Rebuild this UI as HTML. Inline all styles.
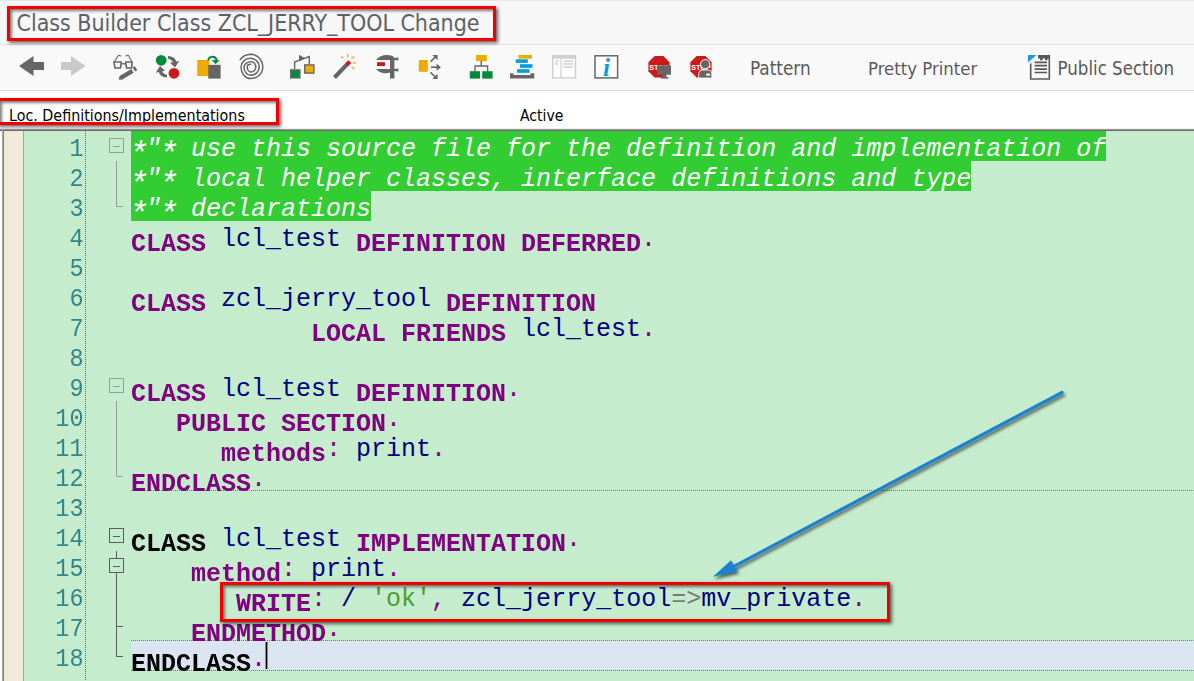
<!DOCTYPE html>
<html><head><meta charset="utf-8"><title>Class Builder Class ZCL_JERRY_TOOL Change</title>
<style>
html,body{margin:0;padding:0;}
body{width:1194px;height:681px;overflow:hidden;position:relative;background:#fff;font-family:"Liberation Sans",sans-serif;}
#titlebar{position:absolute;left:0;top:0;width:1194px;height:44px;background:#f7f7f7;}
#titletop{position:absolute;left:0;top:0;width:1194px;height:1px;background:#e6e6e6;}
#title{position:absolute;left:16.5px;top:9px;font-family:"DejaVu Sans Condensed","Liberation Sans",sans-serif;font-size:22.95px;line-height:28px;color:#5d6167;white-space:nowrap;}
#toolbar{position:absolute;left:0;top:44px;width:1194px;height:47px;background:#f9f9f9;border-top:1px solid #e2e2e2;border-bottom:1px solid #dedede;box-sizing:border-box;}
.tbtxt{position:absolute;top:58px;line-height:22px;color:#595959;white-space:nowrap;font-family:"DejaVu Sans Condensed","Liberation Sans",sans-serif;}
#status{position:absolute;left:0;top:91px;width:1194px;height:38px;background:#fff;}
.sttxt{position:absolute;top:106px;font-size:15.7px;line-height:20px;color:#000;white-space:nowrap;font-family:"DejaVu Sans Condensed","Liberation Sans",sans-serif;}
.redbox{position:absolute;border:3px solid #f20000;box-sizing:border-box;box-shadow:2px 2px 3.5px rgba(0,0,0,.6), inset 2px 2px 3px 0 rgba(0,0,0,.5);}
#editor{position:absolute;left:2px;top:130px;width:1192px;height:551px;background:#c6ecce;}
#edtop{position:absolute;left:0;top:128px;width:1194px;height:3px;background:linear-gradient(#f1f1f1 0,#f1f1f1 33%,#9a9a9a 34%,#9a9a9a 66%,#6c6c6c 67%);}
#edleft{position:absolute;left:2px;top:130px;width:2px;height:551px;background:linear-gradient(90deg,#bdbdbd,#707070);}
#marg{position:absolute;left:4px;top:131px;width:19px;height:550px;background:#f1ead9;border-right:1px solid #a5aaa0;}
.cbg{position:absolute;left:131px;height:30px;background:#32cd32;}
#curline{position:absolute;left:131px;top:641px;width:1063px;height:29px;background:#dbe5f1;}
.ln{position:absolute;left:24px;width:59.5px;transform:scale(.94,1.05);transform-origin:100% 72%;text-align:right;font:25px/30px "Liberation Mono",monospace;color:#338589;height:30px;}
.cl{position:absolute;left:131px;white-space:pre;font:25px/30px "Liberation Mono",monospace;color:#000080;height:30px;}
.k{font-weight:bold;color:#800080;position:relative;top:5px;display:inline-block;transform:scaleY(1.06);transform-origin:0 72%;}
.kb{font-weight:bold;color:#000;position:relative;top:5px;display:inline-block;transform:scaleY(1.06);transform-origin:0 72%;}
.c{font-style:italic;color:#fff;}
.s{color:#4aa02a;}
.a{display:inline-block;transform-origin:50% 29%;transform:translateY(4px) scale(1.3);}
.p{color:#800080;}
.o{color:#7a7a7a;}
svg{position:absolute;left:0;top:0;overflow:visible;}
</style></head><body>
<div id="titlebar"></div><div id="titletop"></div>
<div id="title">Class Builder Class ZCL_JERRY_TOOL Change</div>
<div id="toolbar"></div>
<div class="tbtxt" style="left:750px;top:58px;font-size:18.8px">Pattern</div>
<div class="tbtxt" style="left:868px;font-size:18.4px">Pretty Printer</div>
<div class="tbtxt" style="left:1057.5px;font-size:18.55px">Public Section</div>
<div id="status"></div>
<div class="sttxt" style="left:9px;font-size:15.9px">Loc. Definitions/Implementations</div>
<div class="sttxt" style="left:520px;font-size:15.6px">Active</div>
<div id="editor"></div>
<div id="edtop"></div><div id="edleft"></div><div id="marg"></div>
<div class="cbg" style="top:131px;width:975px"></div>
<div class="cbg" style="top:161px;width:840px"></div>
<div class="cbg" style="top:191px;width:240px"></div>
<div id="curline"></div>
<svg id="icons" width="1194" height="130" viewBox="0 0 1194 130">
<!-- back -->
<path d="M19 66 L33.5 56 L33.5 62 L44 62 L44 70 L33.5 70 L33.5 76 Z" fill="#666"/>
<!-- forward -->
<path d="M85.6 66 L71 56 L71 62 L61 62 L61 70 L71 70 L71 76 Z" fill="#c9c9c9"/>
<!-- glasses + pencil -->
<g fill="none" stroke="#666" stroke-width="1.600" stroke-linejoin="round">
<path d="M114 62 L121.300 62 L120.500 68 L115 68 Z"/>
<path d="M125.600 62 L132.200 62 L131.600 68 L126.600 68 Z"/>
<path d="M121.300 63.800 L125.600 63.800" stroke-width="1.300"/>
</g>
<g fill="none" stroke="#666" stroke-width="1.100" stroke-linecap="round">
<path d="M114.400 61.500 L118.200 55.700 Q119 54.700 120.600 56"/>
<path d="M131.700 61.500 L128.600 55.700 Q127.800 54.700 125.900 56"/>
</g>
<path d="M119.600 76 L131.300 69 L133.600 72.700 L122 79.700 L118.600 79.400 Z" fill="#666"/>
<path d="M132.500 67.600 L134.600 66.200 L137.300 70.100 L135.100 71.500 Z" fill="#666"/>
<!-- activate circles -->
<circle cx="161.2" cy="60.3" r="5.4" fill="#008a3a"/>
<circle cx="174" cy="73.3" r="5.4" fill="#cc1a1a"/>
<path d="M168 56 Q175 56.5 176.2 61.5 L179.3 60.8 L175 67.5 L170 62.8 L172.8 62.2 Q172 59.5 168 58.8 Z" fill="#666"/>
<path d="M167 77.5 Q160 77 158.8 72 L155.7 72.7 L160 66 L165 70.7 L162.2 71.3 Q163 74 167 74.7 Z" fill="#666"/>
<!-- copy boxes with green arrow -->
<rect x="197.2" y="60" width="12" height="16" fill="#f0ab00"/>
<rect x="208.3" y="64.8" width="12.3" height="13.8" fill="#666"/>
<path d="M208.3 60.5 A4.2 4.2 0 0 1 216.6 60" fill="none" stroke="#008a3a" stroke-width="2"/>
<path d="M211.8 60 L219.5 60 L215.6 64.2 Z" fill="#008a3a"/>
<!-- spiral -->
<path d="M240.2 59.6 Q244 54.4 250.5 54.2 A12.30 12.80 0 0 1 262.8 67 A12.30 11.60 0 0 1 250.5 78.6 A9.50 11.60 0 0 1 241 67 A9.50 8.70 0 0 1 250.5 58.3 A8.80 8.70 0 0 1 259.3 67 A8.80 8.30 0 0 1 250.5 75.3 A6.50 8.30 0 0 1 244 67 A7.00 5.20 0 0 1 251 61.8 A4.80 5.20 0 0 1 255.8 67 A4.80 5.00 0 0 1 251 72 A3.80 5.00 0 0 1 247.2 67 A3.30 2.70 0 0 1 250.5 64.3" fill="none" stroke="#666" stroke-width="1.5" stroke-linecap="round"/>
<!-- balance -->
<g fill="none" stroke="#666" stroke-width="1.4">
<path d="M294.6 69 L294.6 62 L309.3 56.6 L309.3 64"/>
</g>
<path d="M299 54.8 L299 61 L305 58.2 Z" fill="#666"/>
<rect x="290.700" y="69.900" width="9.200" height="8" fill="#008a3a" stroke="#666" stroke-width="1.400"/>
<rect x="304.700" y="64.900" width="9.200" height="8.200" fill="#f0ab00" stroke="#666" stroke-width="1.400"/>
<!-- wand -->
<path d="M333 76 L346 62.500 L349 65.300 L336 79 Z" fill="#666"/>
<path d="M345.300 63.200 L348.300 60.200 L351.300 63 L348.300 66 Z" fill="#cc1a1a"/>
<g stroke="#f0ab00" stroke-width="1.300" fill="none">
<path d="M347.600 54 L347.600 57.500"/><path d="M341 56.600 L343.500 58.300"/><path d="M351.500 58.300 L354.300 56.500"/><path d="M353 63 L356 63"/><path d="M351.800 67 L354.300 69.300"/>
</g>
<!-- clamp -->
<path d="M376 60 Q380 55 387 55 Q393 55 394.500 58 L398.400 57.500 L398.400 60.500 L394.400 60 L394.400 68.900 L398.400 68.400 L398.400 71.500 L394.400 71 L394.400 78.600 L390 78.600 L390 72.500 Q387 73.800 383 73 Q378.500 72 376 69 L390 69 L390 60 Z" fill="#666"/>
<rect x="377" y="62.200" width="8" height="3.800" fill="#cc1a1a"/>
<!-- box with arrows -->
<rect x="418.800" y="60" width="9" height="11.800" fill="#f0ab00"/>
<g stroke="#666" stroke-width="1.600" fill="none">
<path d="M430.500 61.700 L435.500 57"/>
<path d="M431 67.200 L438 67.200"/>
<path d="M430.500 72.300 L435.500 77"/>
</g>
<path d="M432.300 55 L437.600 55 L437.600 60.300 Z M436.600 63.700 L441 67.200 L436.600 70.700 Z M432.300 79 L437.600 79 L437.600 73.700 Z" fill="#666"/>
<!-- hierarchy -->
<rect x="476" y="55" width="10.800" height="6.200" fill="#f0ab00"/>
<path d="M481.300 61 L481.300 66 M475 71.500 L475 66 L487.600 66 L487.600 71.500" fill="none" stroke="#666" stroke-width="1.400"/>
<rect x="469.800" y="71.200" width="10.200" height="7.400" fill="#008a3a"/>
<rect x="482.200" y="71.200" width="10.400" height="7.400" fill="#008a3a"/>
<!-- stack -->
<rect x="518.400" y="55" width="13.600" height="3.700" fill="#f0ab00"/>
<rect x="515.700" y="59.300" width="12.100" height="3.600" fill="#009de0"/>
<rect x="520" y="64.200" width="12.500" height="3.600" fill="#009de0"/>
<rect x="517" y="69.200" width="12.600" height="3.600" fill="#009de0"/>
<path d="M510 73.200 L513.500 73.200 L513.500 75 L530.500 75 L530.500 73.200 L534.300 73.200 L534.300 78.600 L510 78.600 Z" fill="#666"/>
<!-- layout gray -->
<rect x="552.700" y="55.800" width="22.700" height="22.100" fill="#fff" stroke="#cfcfcf" stroke-width="1.400"/>
<rect x="552" y="55.100" width="24.100" height="3.600" fill="#cfcfcf"/>
<path d="M561 58 L561 78" stroke="#cfcfcf" stroke-width="1.200"/>
<path d="M555 61 L558.300 61 M555 64 L558.300 64 M563.200 61 L573 61 M563.200 64 L573 64 M563.200 67 L573 67" stroke="#cfcfcf" stroke-width="1.500"/>
<!-- info -->
<rect x="595" y="55.800" width="22.600" height="22.100" fill="#fff" stroke="#666" stroke-width="1.500"/>
<text x="603" y="76" font-family="Liberation Serif, serif" font-style="italic" font-weight="bold" font-size="25" fill="#009de0">i</text>
<!-- stop + monitor -->
<path d="M654.600 56 L663.400 56 L669.600 62.200 L669.600 71.200 L663.400 77.500 L654.600 77.500 L648.400 71.200 L648.400 62.200 Z" fill="#cc1a1a"/>
<text x="649.300" y="69.500" font-family="Liberation Sans, sans-serif" font-weight="bold" font-size="7.200" fill="#fff">STOP</text>
<rect x="657.200" y="65.300" width="13.800" height="9.400" fill="#666"/>
<rect x="663" y="74.500" width="3.500" height="3" fill="#666"/>
<rect x="660.700" y="77" width="7.700" height="1.600" fill="#666"/>
<!-- stop + person -->
<path d="M696.600 56 L705.400 56 L711.600 62.200 L711.600 71.200 L705.400 77.500 L696.600 77.500 L690.400 71.200 L690.400 62.200 Z" fill="#cc1a1a"/>
<text x="691.300" y="69.500" font-family="Liberation Sans, sans-serif" font-weight="bold" font-size="7.200" fill="#fff">STOP</text>
<circle cx="705.200" cy="64.200" r="4.600" fill="#666" stroke="#fff" stroke-width="1"/>
<path d="M698.700 78 L698.700 73.500 Q698.700 70 702.500 70 L708 70 Q711.800 70 711.800 73.500 L711.800 78 Z" fill="#666" stroke="#fff" stroke-width="0.800"/>
<rect x="706.200" y="73.600" width="3.800" height="2" fill="#fff"/>
<!-- public section doc icon -->
<path d="M1028 55 L1036.500 55 L1028 62.500 Z" fill="#1a9be0"/>
<path d="M1038 55.800 L1049.300 55.800 L1049.300 79 L1030.700 79 L1030.700 63.500" fill="none" stroke="#595959" stroke-width="1.600"/>
<path d="M1038 55 L1050 55 L1050 58.500 L1047.500 58.500 L1047.500 60.300 L1045 60.300 L1045 58.500 L1042.500 58.500 L1042.500 60.300 L1040 60.300 L1040 58.500 L1038 58.500 Z" fill="#595959"/>
<path d="M1034.600 62.300 L1047 62.300 M1034.600 65.700 L1047 65.700 M1034.600 69.100 L1047 69.100 M1034.600 72.500 L1047 72.500" stroke="#595959" stroke-width="1.700"/>
</svg>
<svg id="edsvg" width="1194" height="681" viewBox="0 0 1194 681">
<defs><filter id="sh" x="-5%" y="-5%" width="110%" height="120%"><feDropShadow dx="1.500" dy="2.500" stdDeviation="1.700" flood-color="#000" flood-opacity="0.600"/></filter></defs>
<!-- dotted vertical -->
<path d="M85.500 131 L85.500 681" stroke="#2c8286" stroke-width="1" stroke-dasharray="1 1" fill="none"/>
<!-- dotted horizontals -->
<g stroke="#3b8c96" stroke-width="1" stroke-dasharray="1 1" fill="none">
<path d="M131 490.500 L1194 490.500"/><path d="M131 640.500 L1194 640.500"/><path d="M131 670.500 L1194 670.500"/>
</g>
<!-- fold markers (light) -->
<g fill="none" stroke="#9a9a9a" stroke-width="1">
<rect x="109.500" y="138.500" width="14" height="14"/><path d="M113 146.500 L120 146.500"/>
<path d="M116.500 161 L116.500 206.500 L123 206.500"/>
<rect x="109.500" y="378.500" width="14" height="14"/><path d="M113 386.500 L120 386.500"/>
<path d="M116.500 401 L116.500 476.500 L123 476.500"/>
</g>
<!-- fold markers (active) -->
<g fill="none" stroke="#5c5c5c" stroke-width="1">
<rect x="109.500" y="528.500" width="14" height="14"/><path d="M113 536.500 L120 536.500"/>
<path d="M116.500 551 L116.500 558"/>
<rect x="109.500" y="558.500" width="14" height="14"/><path d="M113 566.500 L120 566.500"/>
<path d="M116.500 573 L116.500 656.500 L123 656.500 M116.500 626.500 L123 626.500"/>
</g>
<!-- cursor -->
<path d="M266.500 642 L266.500 669" stroke="#000" stroke-width="1.800"/>
<!-- arrow -->
<g filter="url(#sh)">
<path d="M1062 392.500 L733 566.800" stroke="#1b82d0" stroke-width="3.200" stroke-linecap="round" fill="none"/>
<path d="M712.900 576.800 L731 560.200 L734.300 566.300 L737.700 571.200 Z" fill="#1b82d0"/>
</g>
</svg>
<div class="ln" style="top:134.6px">1</div>
<div class="cl" style="top:135px"><span class="c"><span class="a">*</span>"<span class="a">*</span> use this source file for the definition and implementation of</span></div>
<div class="ln" style="top:164.6px">2</div>
<div class="cl" style="top:165px"><span class="c"><span class="a">*</span>"<span class="a">*</span> local helper classes, interface definitions and type</span></div>
<div class="ln" style="top:194.6px">3</div>
<div class="cl" style="top:195px"><span class="c"><span class="a">*</span>"<span class="a">*</span> declarations</span></div>
<div class="ln" style="top:224.6px">4</div>
<div class="cl" style="top:225px"><span class="k">CLASS</span> lcl_test <span class="k">DEFINITION DEFERRED</span><span class="p">.</span></div>
<div class="ln" style="top:254.6px">5</div>
<div class="ln" style="top:284.6px">6</div>
<div class="cl" style="top:285px"><span class="k">CLASS</span> zcl_jerry_tool <span class="k">DEFINITION</span></div>
<div class="ln" style="top:314.6px">7</div>
<div class="cl" style="top:315px">            <span class="k">LOCAL FRIENDS</span> lcl_test<span class="p">.</span></div>
<div class="ln" style="top:344.6px">8</div>
<div class="ln" style="top:374.6px">9</div>
<div class="cl" style="top:375px"><span class="k">CLASS</span> lcl_test <span class="k">DEFINITION</span><span class="p">.</span></div>
<div class="ln" style="top:404.6px">10</div>
<div class="cl" style="top:405px">   <span class="k">PUBLIC SECTION</span><span class="p">.</span></div>
<div class="ln" style="top:434.6px">11</div>
<div class="cl" style="top:435px">      <span class="k">methods</span><span class="p">:</span> print<span class="p">.</span></div>
<div class="ln" style="top:464.6px">12</div>
<div class="cl" style="top:465px"><span class="k">ENDCLASS</span><span class="p">.</span></div>
<div class="ln" style="top:494.6px">13</div>
<div class="ln" style="top:524.6px">14</div>
<div class="cl" style="top:525px"><span class="kb">CLASS</span> lcl_test <span class="k">IMPLEMENTATION</span><span class="p">.</span></div>
<div class="ln" style="top:554.6px">15</div>
<div class="cl" style="top:555px">    <span class="k">method</span><span class="p">:</span> print<span class="p">.</span></div>
<div class="ln" style="top:584.6px">16</div>
<div class="cl" style="top:585px">       <span class="k">WRITE</span><span class="p">:</span> / <span class="s">'ok'</span><span class="p">,</span> zcl_jerry_tool<span class="o">=&gt;</span>mv_private<span class="p">.</span></div>
<div class="ln" style="top:614.6px">17</div>
<div class="cl" style="top:615px">    <span class="k">ENDMETHOD</span><span class="p">.</span></div>
<div class="ln" style="top:644.6px">18</div>
<div class="cl" style="top:645px"><span class="kb">ENDCLASS</span><span class="p">.</span></div><div class="redbox" style="left:7px;top:6px;width:489px;height:35px;"></div>
<div class="redbox" style="left:-3px;top:98px;width:282px;height:27px;"></div>
<div class="redbox" style="left:220px;top:582px;width:670px;height:40px;border-width:3.5px"></div>
</body></html>
